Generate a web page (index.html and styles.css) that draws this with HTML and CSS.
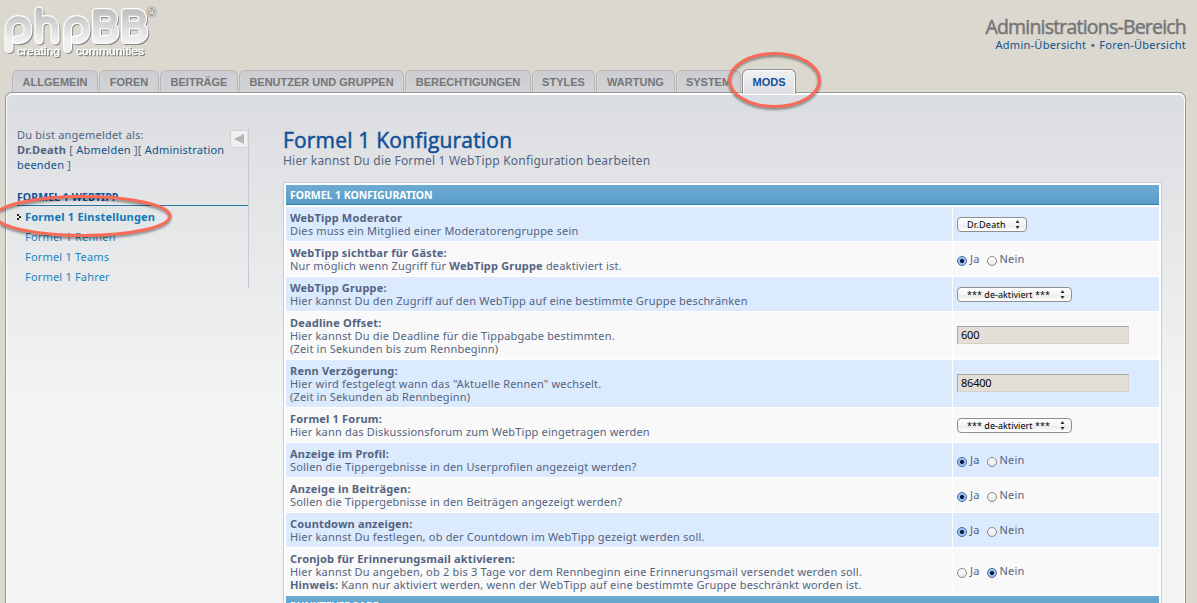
FILE: index.html
```html
<!DOCTYPE html>
<html lang="de">
<head>
<meta charset="utf-8">
<title>Formel 1 Konfiguration</title>
<link rel="stylesheet" href="styles.css">
</head>
<body>
<header class="header">
  <svg class="logo" width="160" height="62" viewBox="0 0 160 62" role="img" aria-label="phpBB creating communities">
    <defs>
      <linearGradient id="metal" gradientUnits="userSpaceOnUse" x1="0" y1="7" x2="0" y2="52">
        <stop offset="0" stop-color="#b9b9b9"/><stop offset=".75" stop-color="#f0f0f0"/><stop offset="1" stop-color="#ededed"/>
      </linearGradient>
      <g id="letters" fill="none" stroke-linecap="round" stroke-linejoin="round">
        <path d="M9 48.500V30C9 23 13 19.500 18.500 19.500C24.500 19.500 28 23.500 28 29.500C28 36 24.500 39.700 18.500 39.700H16.500"/>
        <path d="M39 11V40M39 28C39 22 42 19.500 46.500 19.500C51.500 19.500 55 22.500 55 28V40"/>
        <path d="M67.500 48.500V30C67.500 23 71.500 19.500 77 19.500C82.500 19.500 86 23.500 86 29.500C86 36 82.500 39.700 77 39.700H75"/>
        <path d="M96.500 12.500H107C116 12.500 116 25 107 25H101M107 25C117.500 25 117.500 39.500 107 39.500H96.500V12.500"/>
        <path d="M125.500 12.500H136C145 12.500 145 25 136 25H130M136 25C146.500 25 146.500 39.500 136 39.500H125.500V12.500"/>
      </g>
    </defs>
    <use href="#letters" stroke="#8c8b87" stroke-width="8.800" transform="translate(1 1.200)"/>
    <use href="#letters" stroke="#fff" stroke-width="9"/>
    <use href="#letters" stroke="url(#metal)" stroke-width="6.600"/>
    <text class="slogan" x="17" y="55" textLength="43" lengthAdjust="spacingAndGlyphs">creating</text>
    <text class="slogan" x="76" y="55" textLength="68" lengthAdjust="spacingAndGlyphs">communities</text>
    <text class="registered" x="147" y="17">®</text>
  </svg>
  <div class="site-info">
    <div class="site-title"><span>Administrations-Bereich</span></div>
    <p class="site-links"><a>Admin-Übersicht</a> <b>•</b> <a>Foren-Übersicht</a></p>
  </div>
</header>
<nav class="tabs">
  <a class="tab t1">ALLGEMEIN</a><a class="tab t2">FOREN</a><a class="tab t3">BEITRÄGE</a><a class="tab t4">BENUTZER UND GRUPPEN</a><a class="tab t5">BERECHTIGUNGEN</a><a class="tab t6">STYLES</a><a class="tab t7">WARTUNG</a><a class="tab t8">SYSTEM</a><a class="tab active">MODS</a>
</nav>
<div class="panel">
  <aside class="sidebar">
    <svg class="toggle" width="17" height="18" viewBox="0 0 17 18"><path d="M17 .5H2.500Q.5 .5 .5 2.500V15.500Q.5 17.500 2.500 17.500H17" fill="#f0f0f1" stroke="#cfd0d2"/><path d="M4 9L14 4V14Z" fill="#b4b5b7"/></svg>
    <p class="login"><span class="l1">Du bist angemeldet als:</span><br><span class="l2"><b>Dr.Death</b> [ <a>Abmelden</a> ][ <a>Administration</a></span><br><span class="l3"><a>beenden</a> ]</span></p>
    <h2 class="menu-head"><span>FORMEL 1 WEBTIPP</span></h2>
    <ul class="menu">
      <li class="current"><svg class="marker" width="5" height="7" viewBox="0 0 5 7"><path d="M0 1H2V3H4V5H2V7H0V5H2V3H0Z" fill="#222"/></svg><a>Formel 1 Einstellungen</a></li>
      <li><a>Formel 1 Rennen</a></li>
      <li><a>Formel 1 Teams</a></li>
      <li><a>Formel 1 Fahrer</a></li>
    </ul>
  </aside>
  <main class="content">
    <h1 class="title"><span>Formel 1 Konfiguration</span></h1>
    <p class="intro"><span>Hier kannst Du die Formel 1 WebTipp Konfiguration bearbeiten</span></p>
    <div class="table">
      <div class="thead"><span>FORMEL 1 KONFIGURATION</span></div>
      <div class="row h34"><div class="label"><b>WebTipp Moderator</b><br>Dies muss ein Mitglied einer Moderatorengruppe sein</div><div class="value"><span class="select short">Dr.Death<svg class="arrows" width="5" height="9" viewBox="0 0 5 9"><path d="M2.500 0L4.500 3H.5ZM.5 6H4.500L2.500 9Z"/></svg></span></div></div>
      <div class="row h34 alt"><div class="label"><b>WebTipp sichtbar für Gäste:</b><br>Nur möglich wenn Zugriff für <b>WebTipp Gruppe</b> deaktiviert ist.</div><div class="value"><i class="radio on"></i><span class="choice ja">Ja</span><i class="radio"></i><span class="choice">Nein</span></div></div>
      <div class="row h34"><div class="label"><b>WebTipp Gruppe:</b><br>Hier kannst Du den Zugriff auf den WebTipp auf eine bestimmte Gruppe beschränken</div><div class="value"><span class="select">*** de-aktiviert ***<svg class="arrows" width="5" height="9" viewBox="0 0 5 9"><path d="M2.500 0L4.500 3H.5ZM.5 6H4.500L2.500 9Z"/></svg></span></div></div>
      <div class="row h47 alt"><div class="label"><b>Deadline Offset:</b><br>Hier kannst Du die Deadline für die Tippabgabe bestimmten.<br>(Zeit in Sekunden bis zum Rennbeginn)</div><div class="value"><span class="input">600</span></div></div>
      <div class="row h47"><div class="label"><b>Renn Verzögerung:</b><br>Hier wird festgelegt wann das "Aktuelle Rennen" wechselt.<br>(Zeit in Sekunden ab Rennbeginn)</div><div class="value"><span class="input">86400</span></div></div>
      <div class="row h34 alt"><div class="label"><b>Formel 1 Forum:</b><br>Hier kann das Diskussionsforum zum WebTipp eingetragen werden</div><div class="value"><span class="select">*** de-aktiviert ***<svg class="arrows" width="5" height="9" viewBox="0 0 5 9"><path d="M2.500 0L4.500 3H.5ZM.5 6H4.500L2.500 9Z"/></svg></span></div></div>
      <div class="row h34"><div class="label"><b>Anzeige im Profil:</b><br>Sollen die Tippergebnisse in den Userprofilen angezeigt werden?</div><div class="value"><i class="radio on"></i><span class="choice ja">Ja</span><i class="radio"></i><span class="choice">Nein</span></div></div>
      <div class="row h34 alt"><div class="label"><b>Anzeige in Beiträgen:</b><br>Sollen die Tippergebnisse in den Beiträgen angezeigt werden?</div><div class="value"><i class="radio on"></i><span class="choice ja">Ja</span><i class="radio"></i><span class="choice">Nein</span></div></div>
      <div class="row h34"><div class="label"><b>Countdown anzeigen:</b><br>Hier kannst Du festlegen, ob der Countdown im WebTipp gezeigt werden soll.</div><div class="value"><i class="radio on"></i><span class="choice ja">Ja</span><i class="radio"></i><span class="choice">Nein</span></div></div>
      <div class="row h47 alt"><div class="label"><b>Cronjob für Erinnerungsmail aktivieren:</b><br>Hier kannst Du angeben, ob 2 bis 3 Tage vor dem Rennbeginn eine Erinnerungsmail versendet werden soll.<br><b>Hinweis:</b> Kann nur aktiviert werden, wenn der WebTipp auf eine bestimmte Gruppe beschränkt worden ist.</div><div class="value"><i class="radio"></i><span class="choice ja">Ja</span><i class="radio on"></i><span class="choice">Nein</span></div></div>
      <div class="thead"><span>PUNKTEVERGABE</span></div>
    </div>
  </main>
</div>
<svg class="marks" width="1197" height="603" viewBox="0 0 1197 603">
  <g fill="none" stroke="#f96a57" stroke-width="3">
    <ellipse cx="774.500" cy="80" rx="45" ry="26.500"/>
    <ellipse cx="83" cy="216" rx="87" ry="19.500"/>
  </g>
</svg>
</body>
</html>
```
FILE: styles.css
```css
* { box-sizing: border-box; }
body { margin: 0; width: 1197px; height: 603px; overflow: hidden; position: relative; background: #dbd8d0; color: #536482; font-family: "Noto Sans", sans-serif; font-size: 11px; line-height: 13px; letter-spacing: .19px; }
p, h1, h2, ul { margin: 0; padding: 0; }
a { color: #105289; }
.header { height: 70px; display: flex; justify-content: space-between; padding: 0 11px 0 0; }
.logo { display: block; letter-spacing: 0; }
.slogan { font: 11px "Liberation Sans", sans-serif; fill: #fff; paint-order: stroke; stroke: #fff; stroke-width: .4px; filter: drop-shadow(1px 1px 0 #777); }
.registered { font: 12px "Liberation Sans", sans-serif; fill: #fff; paint-order: stroke; stroke: #8a8985; stroke-width: 1.200px; }
.site-info { text-align: right; padding-top: 15px; white-space: nowrap; }
.site-title { font: 19.500px/23px "Open Sans", "Noto Sans", sans-serif; color: #767676; letter-spacing: -.8px; -webkit-text-stroke: .5px #767676; }
.site-links { line-height: 13px; letter-spacing: .25px; }
.site-links b { font: 11px/11px "DejaVu Sans", sans-serif; color: #536482; }

.tabs { height: 24px; padding-left: 12px; display: flex; align-items: flex-end; position: relative; z-index: 1; margin-bottom: -2px; letter-spacing: 0; }
.tab { height: 22px; margin-right: 1px; flex: none; border: 1px solid #b8b8b6; border-bottom: 0; border-radius: 6px 6px 0 0; background: linear-gradient(#cbcdd1, #d3d4d8); box-shadow: inset 1px 0 #d3d4d6; color: #767676; font: bold 11px/23px "Liberation Sans", Arial, sans-serif; text-align: center; white-space: nowrap; margin-bottom: 2px; }
.t1 { width: 86px; } .t2 { width: 60px; } .t3 { width: 78px; } .t4 { width: 165px; } .t5 { width: 126px; } .t6 { width: 63px; } .t7 { width: 79px; } .t8 { width: 65px; }
.tab.active { width: 54px; height: 25px; margin: 0; border-color: #8e8e8c; background: linear-gradient(#f0f1f3, #dcdee2); color: #115098; box-shadow: inset 0 1px #fff, inset 1px 0 #fff, inset -1px 0 #fff; line-height: 25px; }

.panel { margin: 0 11px 0 5px; height: 530px; border: 1px solid #999795; border-bottom: 0; border-radius: 7px 7px 0 0; box-shadow: inset 0 2px #fff, inset 1px 0 #fff, inset -1px 0 #fff; background: linear-gradient(#dadee2 0, #dcdee1 20px, #f2f3f3 300px, #f3f3f3 100%); display: flex; }
.sidebar { width: 232px; height: 161px; margin: 34px 0 0 11px; border-right: 1px solid #c6c9cd; position: relative; }
.toggle { position: absolute; right: 1px; top: 3px; }
.login { line-height: 15px; white-space: nowrap; letter-spacing: .22px; }
.menu-head { margin-top: 20px; height: 14px; border-bottom: 1px solid #2776a5; font: bold 10.500px/11px "Noto Sans", sans-serif; letter-spacing: .07px; color: #115098; white-space: nowrap; }
.menu { list-style: none; padding-top: 1px; }
.menu li { height: 20px; line-height: 20px; padding-left: 8px; white-space: nowrap; position: relative; }
.menu a { color: #1b87c3; }
.menu .current a { color: #1078b8; font-weight: 700; letter-spacing: .22px; }
.marker { position: absolute; left: 0; top: 6px; }

.content { margin: 35px 0 0 34px; width: 879px; }
.title { font: 21px/24px "Open Sans", "Noto Sans", sans-serif; color: #115098; white-space: nowrap; -webkit-text-stroke: .5px #115098; }
.intro { padding-top: 1px; font-size: 12px; line-height: 16px; letter-spacing: .2px; white-space: nowrap; }
.table { margin-top: 13px; width: 879px; padding: 2px; border: 1px solid #c8cbd0; background: #fff; height: 450px; overflow: hidden; }
.thead { height: 20px; margin-bottom: 2px; padding: 0 4px; border-bottom: 1px solid #2c79a8; background: linear-gradient(#6cabd3, #599ec8); color: #fff; font: bold 10.500px/20px "Noto Sans", sans-serif; letter-spacing: -.04px; }
.row { display: grid; grid-template-columns: 666px 1fr; column-gap: 1px; margin-bottom: 1px; }
.row > div { background: #dceafe; }
.row.alt > div { background: #f9f9f9; }
.label { padding: 4px; white-space: nowrap; }
.value { padding: 0 4px; display: flex; align-items: center; white-space: nowrap; }
.h34 { height: 34px; } .h47 { height: 47px; }
.select { width: 115px; height: 15px; border: 1px solid #8e8f91; border-radius: 4px; background: linear-gradient(#fff, #f4f4f4 50%, #e9e9e9 50%, #fff); color: #000; font-size: 9px; line-height: 13px; letter-spacing: .03px; padding: 0 6px 0 9px; display: flex; justify-content: space-between; align-items: center; }
.select.short { width: 70px; letter-spacing: .25px; }
.arrows { fill: #333; }
.input { width: 172px; height: 18px; margin-bottom: 2px; border: 1px solid #d5d1c8; border-top-color: #aaa7a2; border-left-color: #aaa7a2; background: #e3dfd8; color: #000; padding: 0 3px; line-height: 16px; letter-spacing: -.2px; }
.radio { width: 10px; height: 10px; border: 1px solid #888; border-radius: 50%; background: linear-gradient(#fff, #e8e8e8); margin: 3px 3px 0 0; }
.radio.on { border-color: #4b65a0; background: radial-gradient(circle, #0b1c3c 0 1.600px, #8fbcf0 2.400px, #b9dcff); }
.choice { padding-bottom: 2px; }
.ja { margin-right: 7px; }
.marks { position: absolute; left: 0; top: 0; z-index: 3; filter: drop-shadow(0 2px 1px rgba(0, 0, 0, .4)); pointer-events: none; }
```
